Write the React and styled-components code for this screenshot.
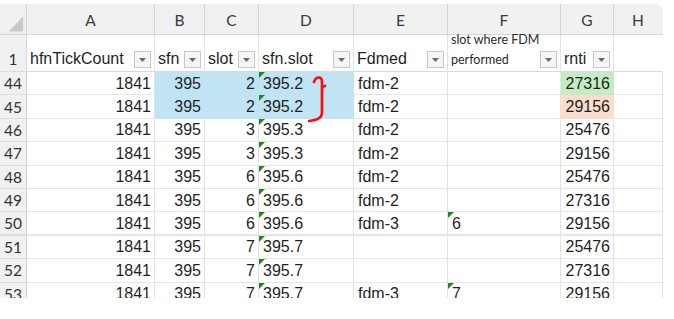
import React from "react";
import styled, { createGlobalStyle } from "styled-components";

const GlobalStyle = createGlobalStyle`
  html, body {
    margin: 0;
    padding: 0;
    background: #fff;
  }
`;

const COLS = [27, 128, 50, 54, 95, 94, 113, 53, 49];
const LETTERS = ["A", "B", "C", "D", "E", "F", "G", "H"];

const FILLS = {
  blue: "#c0e4f3",
  green: "#c3ecc5",
  peach: "#fcdccb",
};

const rows = [
  { n: 44, c: 2, d: "395.2", e: "fdm-2", f: "", g: 27316, sel: true, gFill: "green" },
  { n: 45, c: 2, d: "395.2", e: "fdm-2", f: "", g: 29156, sel: true, gFill: "peach" },
  { n: 46, c: 3, d: "395.3", e: "fdm-2", f: "", g: 25476 },
  { n: 47, c: 3, d: "395.3", e: "fdm-2", f: "", g: 29156 },
  { n: 48, c: 6, d: "395.6", e: "fdm-2", f: "", g: 25476 },
  { n: 49, c: 6, d: "395.6", e: "fdm-2", f: "", g: 27316 },
  { n: 50, c: 6, d: "395.6", e: "fdm-3", f: "6", g: 29156, thick: true },
  { n: 51, c: 7, d: "395.7", e: "", f: "", g: 25476 },
  { n: 52, c: 7, d: "395.7", e: "", f: "", g: 27316 },
  { n: 53, c: 7, d: "395.7", e: "fdm-3", f: "7", g: 29156 },
];

function FilterButton() {
  return (
    <Filter>
      <svg width="7" height="4" viewBox="0 0 7 4">
        <path d="M0 0 L7 0 L3.5 4 Z" fill="#6b6b6b" />
      </svg>
    </Filter>
  );
}

function App() {
  return (
    <>
      <GlobalStyle />
      <Page>
        <Sheet>
          <Grid>
            <Corner>
              <svg width="27" height="31" viewBox="0 0 27 31">
                <path d="M24 12 L24 28 L9 28 Z" fill="#c9c9c9" />
              </svg>
            </Corner>
            {LETTERS.map((l) => (
              <ColHead key={l} $last={l === "H"}>{l}</ColHead>
            ))}

            <RowNum $head>1</RowNum>
            <HeadCell>hfnTickCount<FilterButton /></HeadCell>
            <HeadCell>sfn<FilterButton /></HeadCell>
            <HeadCell>slot<FilterButton /></HeadCell>
            <HeadCell>sfn.slot<FilterButton /></HeadCell>
            <HeadCell>Fdmed<FilterButton /></HeadCell>
            <HeadCell $small>
              <SmallLabel>slot where FDM<br />performed</SmallLabel>
              <FilterButton />
            </HeadCell>
            <HeadCell>rnti<FilterButton /></HeadCell>
            <HeadCell $blank />

            {rows.map((r) => (
              <React.Fragment key={r.n}>
                <RowNum $thick={r.thick}>{r.n}</RowNum>
                <Cell $align="right" $thick={r.thick}>1841</Cell>
                <Cell $align="right" $fill={r.sel && "blue"} $thick={r.thick}>395</Cell>
                <Cell $align="right" $fill={r.sel && "blue"} $thick={r.thick}>{r.c}</Cell>
                <Cell $fill={r.sel && "blue"} $thick={r.thick}>
                  <Flag />
                  {r.d}
                </Cell>
                <Cell $thick={r.thick}>{r.e}</Cell>
                <Cell $thick={r.thick}>
                  {r.f && <Flag />}
                  {r.f}
                </Cell>
                <Cell $align="right" $fill={r.gFill} $thick={r.thick}>{r.g}</Cell>
                <Cell $thick={r.thick} />
              </React.Fragment>
            ))}
          </Grid>

          <Brace width="26" height="52" viewBox="0 0 26 52">
            <path
              d="M7 8 C9 2, 15 2, 15 8 L15 13 L18 12 M15 12 L15 39 C14.5 45, 9 46, 2 47"
              fill="none"
              stroke="#ff0a0a"
              strokeWidth="2.7"
              strokeLinecap="round"
              strokeLinejoin="round"
            />
          </Brace>
        </Sheet>
      </Page>
    </>
  );
}

const Page = styled.div`
  width: 674px;
  height: 319px;
  padding-top: 4px;
  box-sizing: border-box;
  background: #fff;
  overflow: hidden;
`;

const Sheet = styled.div`
  position: relative;
  width: 663px;
  height: 294px;
  overflow: hidden;
  border-top-right-radius: 8px;
`;

const Grid = styled.div`
  display: grid;
  grid-template-columns: ${COLS.map((c) => c + "px").join(" ")};
  grid-template-rows: 31px 37px repeat(10, 23.4px);
  font-family: "Liberation Sans", Arial, sans-serif;
  font-size: 16px;
  color: #1f1f1f;
`;

const Corner = styled.div`
  background: #f1f1f1;
  border-right: 1px solid #d6d6d6;
  border-bottom: 1px solid #d6d6d6;
  box-sizing: border-box;
  display: flex;
`;

const ColHead = styled.div`
  background: #f1f1f1;
  border-right: 1px solid ${(p) => (p.$last ? "#f1f1f1" : "#d6d6d6")};
  border-bottom: 1px solid #d6d6d6;
  box-sizing: border-box;
  display: flex;
  align-items: center;
  justify-content: center;
  font-family: Lato, "Noto Sans", sans-serif;
  font-size: 15.5px;
  color: #3a3a3a;
  padding-top: 1px;
`;

const RowNum = styled.div`
  background: #f1f1f1;
  border-right: 1px solid #d6d6d6;
  border-bottom: ${(p) => (p.$thick ? "2px solid #dcdcdc" : "1px solid #dedede")};
  box-sizing: border-box;
  display: flex;
  align-items: ${(p) => (p.$head ? "flex-end" : "center")};
  justify-content: center;
  padding-bottom: ${(p) => (p.$head ? "3px" : "0")};
  font-family: Lato, "Noto Sans", sans-serif;
  font-size: 15.5px;
  color: #333;
`;

const HeadCell = styled.div`
  display: flex;
  align-items: flex-end;
  justify-content: space-between;
  padding: 0 3px 3px 3px;
  border-right: 1px solid ${(p) => (p.$blank ? "#ffffff" : "#e3e3e3")};
  border-bottom: 1px solid #d9d9d9;
  box-sizing: border-box;
  line-height: 18px;
  white-space: nowrap;
`;

const SmallLabel = styled.span`
  font-family: Lato, "Noto Sans", sans-serif;
  font-size: 12.5px;
  line-height: 20px;
  color: #2a2a2a;
  margin-bottom: -2px;
`;

const Filter = styled.span`
  display: flex;
  align-items: center;
  justify-content: center;
  width: 17px;
  height: 17px;
  box-sizing: border-box;
  border: 1px solid #c8c8c8;
  background: #f6f6f6;
  flex-shrink: 0;
`;

const Cell = styled.div`
  position: relative;
  display: flex;
  align-items: center;
  justify-content: ${(p) => (p.$align === "right" ? "flex-end" : "flex-start")};
  padding: 1px 3px 0 4px;
  background: ${(p) => (p.$fill ? FILLS[p.$fill] : "#fff")};
  border-right: 1px solid ${(p) => (p.$fill ? FILLS[p.$fill] : "#e3e3e3")};
  border-bottom: ${(p) => (p.$thick ? "2px" : "1px")} solid
    ${(p) => (p.$fill ? FILLS[p.$fill] : p.$thick ? "#e6e6e6" : "#e6e6e6")};
  box-sizing: border-box;
  white-space: nowrap;
`;

const Flag = styled.span`
  position: absolute;
  top: 0;
  left: 0;
  width: 0;
  height: 0;
  border-top: 6px solid #1b8a1b;
  border-right: 6px solid transparent;
`;

const Brace = styled.svg`
  position: absolute;
  left: 307px;
  top: 70px;
  pointer-events: none;
`;

export default App;
